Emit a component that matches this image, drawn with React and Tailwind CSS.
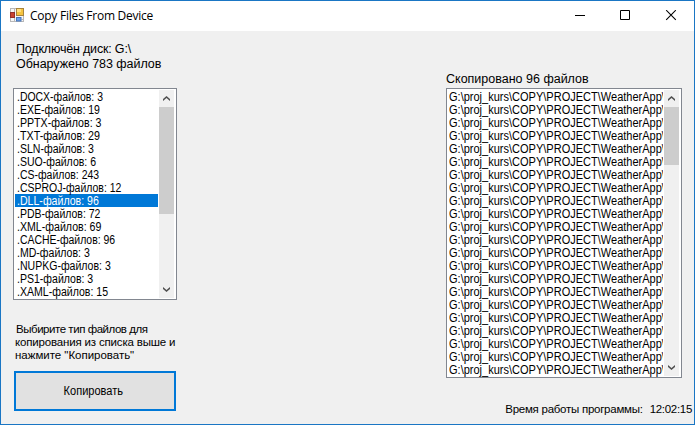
const fileTypes = [
  ['.DOCX-файлов: 3', 'scale-x-[.87]'],
  ['.EXE-файлов: 19', 'scale-x-[.875]'],
  ['.PPTX-файлов: 3', 'scale-x-[.885]'],
  ['.TXT-файлов: 29', 'scale-x-[.895]'],
  ['.SLN-файлов: 3', 'scale-x-[.88]'],
  ['.SUO-файлов: 6', 'scale-x-[.877]'],
  ['.CS-файлов: 243', 'scale-x-[.873]'],
  ['.CSPROJ-файлов: 12', 'scale-x-[.874]'],
  ['.DLL-файлов: 96', 'scale-x-[.882]'],
  ['.PDB-файлов: 72', 'scale-x-[.874]'],
  ['.XML-файлов: 69', 'scale-x-[.884]'],
  ['.CACHE-файлов: 96', 'scale-x-[.87]'],
  ['.MD-файлов: 3', 'scale-x-[.88]'],
  ['.NUPKG-файлов: 3', 'scale-x-[.878]'],
  ['.PS1-файлов: 3', 'scale-x-[.878]'],
  ['.XAML-файлов: 15', 'scale-x-[.88]'],
];

const copied = Array.from({ length: 22 }, () => 'G:\\proj_kurs\\COPY\\PROJECT\\WeatherApp\\');

function Arrow({ down }) {
  return (
    <div className="flex h-[17px] shrink-0 items-center justify-center">
      <svg width="7" height="5" viewBox="0 0 7 5" fill="#505050">
        <path d={down ? 'M0 0 3.5 3 7 0V2L3.5 5 0 2Z' : 'M0 5 3.5 2 7 5V3L3.5 0 0 3Z'} />
      </svg>
    </div>
  );
}

function ScrollBar({ thumb }) {
  return (
    <div className="my-px mr-0.5 flex w-[15px] shrink-0 flex-col bg-[#f0f0f0]">
      <Arrow />
      <div className={`${thumb} bg-[#cdcdcd]`} />
      <div className="flex-1" />
      <Arrow down />
    </div>
  );
}

function TitleBar() {
  return (
    <header className="flex h-[30px] shrink-0 items-center bg-white pl-[9px]">
      <svg className="mb-[2px] shrink-0" width="15" height="14" viewBox="0 0 15 14">
        <rect x=".5" y=".5" width="13" height="13" fill="#f6f6f6" stroke="#b8b8b8" />
        <path d="M4.5 0v4M4.5 10v4M11.5 11.5h2" stroke="#b8b8b8" />
        <rect x="6.5" y=".5" width="7" height="7" fill="#f5c440" stroke="#a8843c" />
        <rect x="7" y="1" width="4" height="3" fill="#ffdf80" />
        <rect x=".5" y="4.5" width="4" height="5" fill="#c8422f" stroke="#93302b" />
        <rect x="6.5" y="9.5" width="4.5" height="3.5" fill="#6aa1ed" stroke="#4674b9" />
      </svg>
      <h1 className="ml-[5px] whitespace-nowrap font-['Open_Sans','Noto_Sans',sans-serif] text-[12px] leading-[16px] tracking-[-0.25px] text-black">
        Copy Files From Device
      </h1>
      <svg className="ml-auto mr-[17px] shrink-0" width="102" height="12" viewBox="0 0 102 12" fill="none" stroke="#000">
        <path d="M0 5.5H10M45.5 .5h9v9h-9z" />
        <path d="m91.2 .2 9.6 9.6m0-9.6-9.6 9.6" strokeWidth="1.1" />
      </svg>
    </header>
  );
}

export default function App() {
  return (
    <div className="flex h-[425px] w-[695px] flex-col overflow-hidden border border-[#1a76c4] bg-[#f0f0f0] font-['Liberation_Sans',Arial,sans-serif] text-[12px] leading-[13px] text-black">
      <TitleBar />
      <main className="flex flex-1 justify-between">
        <section className="ml-3 flex w-[164px] flex-col pt-[11px]">
          <div className="h-[46px] whitespace-nowrap pl-[3px] text-[12.5px] leading-[15px]">
            <p className="tracking-[-0.18px]">Подключён диск: G:\</p>
            <p className="tracking-[-0.04px]">Обнаружено 783 файлов</p>
          </div>
          <div className="flex h-[212px] border border-[#828790] bg-white">
            <ul className="flex-1 overflow-hidden py-px pl-px pr-px">
              {fileTypes.map(([label, scale], i) => (
                <li key={label} className={`h-[13px] whitespace-nowrap pl-[2px] leading-[15px] ${i === 8 ? 'bg-[#0078d7] text-white' : ''}`}>
                  <span className={`block h-[13px] origin-left ${scale}`}>{label}</span>
                </li>
              ))}
            </ul>
            <ScrollBar thumb="h-[107px]" />
          </div>
          <div className="mt-[23px] whitespace-nowrap pl-[3px] text-[11.5px]">
            <p className="tracking-[-0.46px]">Выбирите тип файлов для</p>
            <p className="-ml-px tracking-[-0.17px]">копирования из списка выше и</p>
            <p className="-ml-px tracking-[-0.02px]">нажмите "Копировать"</p>
          </div>
          <button className="ml-px mt-[9px] h-10 w-[162px] border-2 border-[#0078d7] bg-[#e1e1e1] pr-[3px] text-[12px]">
            <span className="inline-block scale-x-[.92]">Копировать</span>
          </button>
        </section>
        <section className="flex w-[248px] flex-col pt-[41px]">
          <p className="h-4 whitespace-nowrap text-[12.5px] leading-[14px]">Скопировано 96 файлов</p>
          <div className="flex h-[290px] w-[236px] border border-[#828790] bg-white">
            <ul className="mr-px w-[216px] overflow-hidden py-px pl-[2px]">
              {copied.map((path, i) => (
                <li key={i} className="h-[13px] origin-left scale-x-[.918] whitespace-nowrap leading-[15px]">{path}</li>
              ))}
            </ul>
            <ScrollBar thumb="h-[58px]" />
          </div>
          <footer className="mr-[2px] mt-[25px] flex justify-end whitespace-nowrap text-[11.5px]">
            <span className="tracking-[-0.26px]">Время работы программы:</span>
            <span className="ml-[7px] tracking-[-0.3px]">12:02:15</span>
          </footer>
        </section>
      </main>
    </div>
  );
}
